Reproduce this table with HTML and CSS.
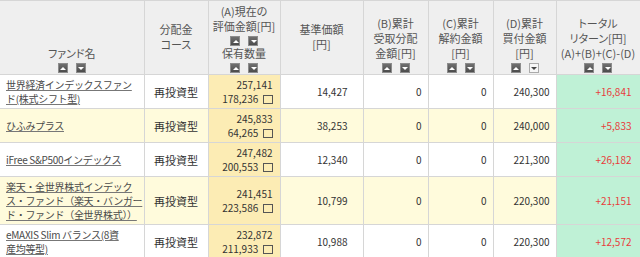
FILE: index.html
```html
<!DOCTYPE html>
<html lang="ja">
<head>
<meta charset="utf-8">
<link rel="stylesheet" href="styles.css">
</head>
<body>
<table class="funds">
  <colgroup>
    <col class="c-name"><col class="c-course"><col class="c-a"><col class="c-base"><col class="c-b"><col class="c-c"><col class="c-d"><col class="c-total">
  </colgroup>
  <thead>
    <tr>
      <th class="h-bottom"><div>ファンド名</div><div class="sort"><span class="sb up"></span><span class="sb down"></span></div></th>
      <th class="h-mid"><div>分配金</div><div>コース</div></th>
      <th class="h-bottom"><div>(A)現在の</div><div>評価金額[円]</div><div class="sort"><span class="sb up"></span><span class="sb down"></span></div><div>保有数量</div><div class="sort"><span class="sb up"></span><span class="sb down"></span></div></th>
      <th class="h-mid"><div>基準価額</div><div>[円]</div></th>
      <th class="h-bottom"><div>(B)累計</div><div>受取分配</div><div>金額[円]</div><div class="sort"><span class="sb up"></span><span class="sb down"></span></div></th>
      <th class="h-bottom"><div>(C)累計</div><div>解約金額</div><div>[円]</div><div class="sort"><span class="sb up"></span><span class="sb down"></span></div></th>
      <th class="h-bottom"><div>(D)累計</div><div>買付金額</div><div>[円]</div><div class="sort"><span class="sb up"></span><span class="sb down active"></span></div></th>
      <th class="h-bottom"><div>トータル</div><div>リターン[円]</div><div>(A)+(B)+(C)-(D)</div><div class="sort"><span class="sb up"></span><span class="sb down"></span></div></th>
    </tr>
  </thead>
  <tbody>
    <tr>
      <td class="name"><a href="#">世界経済インデックスファン<br>ド(株式シフト型)</a></td>
      <td class="course">再投資型</td>
      <td class="a"><div>257,141</div><div>178,236 <span class="chk"></span></div></td>
      <td class="base">14,427</td>
      <td class="num">0</td>
      <td class="num">0</td>
      <td class="num">240,300</td>
      <td class="total">+16,841</td>
    </tr>
    <tr class="alt">
      <td class="name"><a href="#">ひふみプラス</a></td>
      <td class="course">再投資型</td>
      <td class="a"><div>245,833</div><div>64,265 <span class="chk"></span></div></td>
      <td class="base">38,253</td>
      <td class="num">0</td>
      <td class="num">0</td>
      <td class="num">240,000</td>
      <td class="total">+5,833</td>
    </tr>
    <tr>
      <td class="name"><a href="#">iFree S&amp;P500インデックス</a></td>
      <td class="course">再投資型</td>
      <td class="a"><div>247,482</div><div>200,553 <span class="chk"></span></div></td>
      <td class="base">12,340</td>
      <td class="num">0</td>
      <td class="num">0</td>
      <td class="num">221,300</td>
      <td class="total">+26,182</td>
    </tr>
    <tr class="alt">
      <td class="name"><a href="#">楽天・全世界株式インデック<br>ス・ファンド（楽天・バンガー<br>ド・ファンド（全世界株式））</a></td>
      <td class="course">再投資型</td>
      <td class="a"><div>241,451</div><div>223,586 <span class="chk"></span></div></td>
      <td class="base">10,799</td>
      <td class="num">0</td>
      <td class="num">0</td>
      <td class="num">220,300</td>
      <td class="total">+21,151</td>
    </tr>
    <tr>
      <td class="name"><a href="#">eMAXIS Slim バランス(8資<br>産均等型)</a></td>
      <td class="course">再投資型</td>
      <td class="a"><div>232,872</div><div>211,933 <span class="chk"></span></div></td>
      <td class="base">10,988</td>
      <td class="num">0</td>
      <td class="num">0</td>
      <td class="num">220,300</td>
      <td class="total">+12,572</td>
    </tr>
    <tr class="alt">
      <td class="name"></td><td></td><td class="a"></td><td></td><td></td><td></td><td></td><td class="total"></td>
    </tr>
  </tbody>
</table>
</body>
</html>
```

FILE: styles.css
```css
body {
  margin: 0;
  background: #fff;
  font-family: "Noto Sans CJK JP", "Noto Sans", sans-serif;
  font-feature-settings: "palt";
  color: #333;
}

.funds {
  border-collapse: collapse;
  table-layout: fixed;
  width: 640px;
}

.c-name { width: 144px; }
.c-course { width: 64px; }
.c-a { width: 72px; }
.c-base { width: 83px; }
.c-b { width: 65px; }
.c-c { width: 65px; }
.c-d { width: 63px; }
.c-total { width: 84px; }

.funds th {
  background: #efefef;
  color: #555;
  font-weight: normal;
  font-size: 11px;
  line-height: 15px;
  border: 1px solid #d6d6d6;
  padding: 0 0 1px;
  height: 72px;
  text-align: center;
  white-space: nowrap;
}

.funds th:first-child,
.funds td:first-child {
  border-left: none;
}

.h-bottom { vertical-align: bottom; }
.h-mid { vertical-align: middle; }

.sort {
  display: flex;
  justify-content: center;
  gap: 8px;
  height: 12px;
  align-items: flex-end;
}

.sb {
  position: relative;
  width: 10px;
  height: 10px;
  box-sizing: border-box;
  background: linear-gradient(#707070, #4c4c4c);
  border: 1px solid #8c8c8c;
}

.sb::after {
  content: "";
  position: absolute;
  left: 1.5px;
  width: 0;
  height: 0;
  border-left: 3px solid transparent;
  border-right: 3px solid transparent;
}

.sb.up::after {
  top: 2.5px;
  border-bottom: 3px solid #fff;
}

.sb.down::after {
  top: 3px;
  border-top: 3px solid #fff;
}

.sb.active {
  background: #f6f6f6;
  border-color: #aaa;
}

.sb.active::after {
  border-top-color: #444;
}

.funds td {
  border: 1px solid #d6d6d6;
  padding: 3px 6px 2px;
  font-size: 10px;
  line-height: 14px;
  vertical-align: middle;
  text-align: right;
  color: #333;
}

.funds tr.alt td { background: #fffbdc; }

.funds td.name {
  text-align: left;
  font-size: 10px;
  font-feature-settings: normal;
  letter-spacing: -0.3px;
  padding: 3px 0 2px 6px;
  white-space: nowrap;
}

.name a {
  color: #4a4a4a;
  text-decoration: underline;
  text-decoration-color: #777;
}

.funds td.course {
  text-align: center;
  font-size: 11px;
}

.funds td.a,
.funds tr.alt td.a {
  background: #fcecb4;
  padding-right: 7px;
}

.chk {
  display: inline-block;
  width: 8px;
  height: 7px;
  border: 1px solid #555;
  vertical-align: -1px;
  margin-left: 2px;
}

.funds td.base { padding-right: 15px; }

.funds td.num { padding-right: 6px; }

.funds td.total,
.funds tr.alt td.total {
  background: #bff1d6;
  color: #e83c3c;
  padding-right: 8px;
}
```
